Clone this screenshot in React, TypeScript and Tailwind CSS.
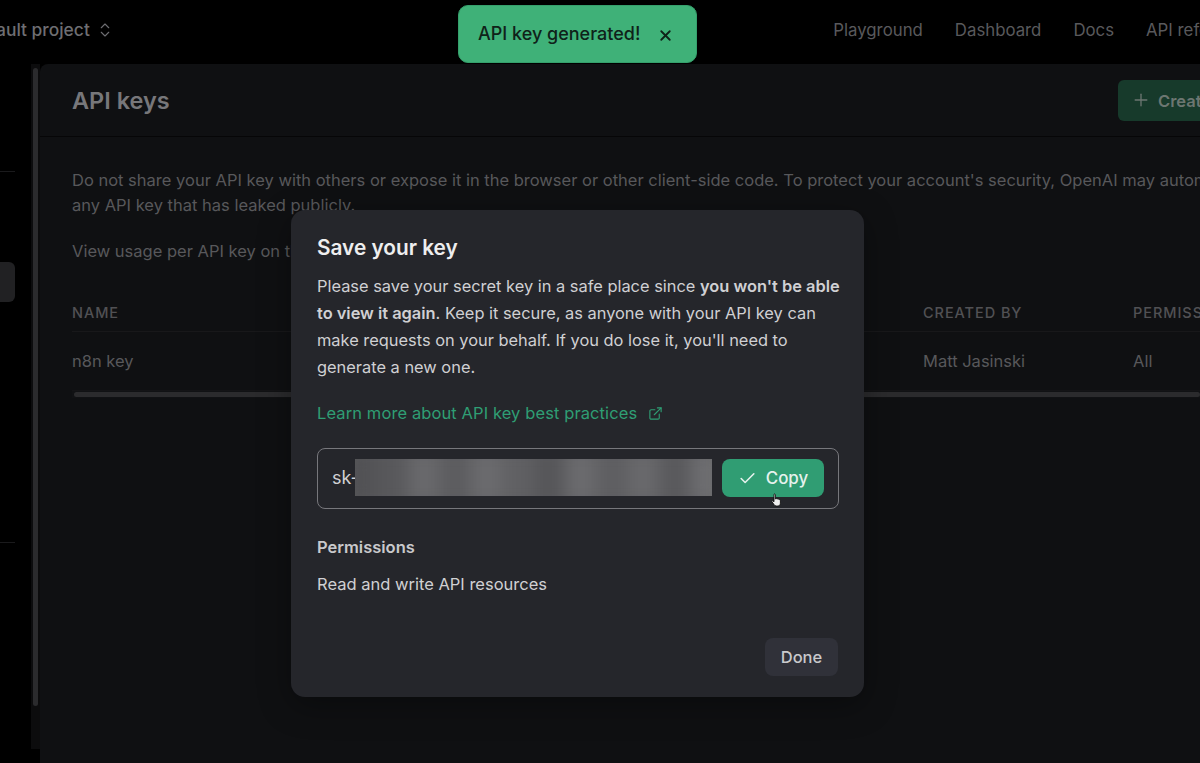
import React from "react";
import { ChevronsUpDown, Plus, X, Check, ExternalLink } from "lucide-react";

const blobs = ["#525255", "#58585b", "#69696c", "#5c5c5f", "#6b6b6e", "#606063", "#565659", "#6b6b6e", "#5e5e61", "#69696c", "#59595c", "#6e6e71"];

export default function App() {
  return (
    <div className="relative flex h-[763px] w-[1200px] flex-col overflow-hidden bg-black font-['Inter',sans-serif] text-[16.5px]">
      <header className="flex h-[64px] shrink-0 items-center justify-between">
        <div className="ml-[-33px] mt-[-4px] flex items-center gap-[6px] text-[17.4px] font-medium text-[#6e6e72]">
          <span>Default project</span>
          <ChevronsUpDown size={18} strokeWidth={1.5} />
        </div>
        <nav className="mr-[-54px] mt-[-3px] flex items-center gap-[32px] text-[16.8px] text-[#59595c]">
          <span>Playground</span>
          <span>Dashboard</span>
          <span>Docs</span>
          <span>API reference</span>
        </nav>
      </header>
      <div className="flex min-h-0 flex-1">
        <aside className="flex w-[40px] shrink-0">
          <div className="flex h-[685px] w-[31px] flex-col">
            <div className="mt-[107px] h-px w-[15px] bg-[#1a1a1c]" />
            <div className="mt-[90px] h-[40px] w-[15px] rounded-r-[6px] bg-[#212123]" />
            <div className="mt-[240px] h-px w-[15px] bg-[#1a1a1c]" />
          </div>
          <div className="flex h-[685px] w-[9px] justify-center bg-[#0c0c0d] pt-[4px]">
            <div className="h-[638px] w-[5px] rounded-full bg-[#2b2b2d]" />
          </div>
        </aside>
        <main className="min-w-[1160px] flex-1 rounded-tl-[8px] bg-[#0f1012]">
          <div className="flex h-[73px] items-center justify-between border-b border-[#060607] pl-[32px]">
            <h1 className="mt-[2px] text-[23.5px] font-semibold text-[#77777a]">API keys</h1>
            <div className="mr-[-60px] flex h-[41px] w-[142px] items-center gap-[7px] rounded-[6px] bg-[#173a2b] pl-[13px] font-semibold text-[#6c7671]">
              <Plus size={20} strokeWidth={1.6} />
              <span className="mt-[2px]">Create</span>
            </div>
          </div>
          <div className="pl-[32px] pt-[31px] text-[#58585b]">
            <p className="w-[1300px] leading-[25px]">
              Do not share your API key with others or expose it in the browser or other client-side code. To protect your account's security, OpenAI may automatically disable
              <br />
              any API key that has leaked publicly.
            </p>
            <p className="mt-[21px] leading-[25px]">View usage per API key on the Usage page.</p>
            <div className="mt-[34px] w-[1128px] overflow-hidden">
              <div className="grid h-[34px] w-[1300px] grid-cols-[851px_210px_200px] items-center border-b border-[#18181a] pb-[3px] text-[14.5px] font-medium tracking-[0.065em] text-[#515154]">
                <span>NAME</span>
                <span>CREATED BY</span>
                <span>PERMISSIONS</span>
              </div>
              <div className="grid h-[58px] w-[1300px] grid-cols-[851px_210px_200px] items-center text-[#58585b]">
                <span>n8n key</span>
                <span>Matt Jasinski</span>
                <span>All</span>
              </div>
              <div className="flex h-[8px] items-center border-t border-[#141416] bg-[#111214] pl-[2px]">
                <div className="h-[5px] w-full rounded-full bg-[#2b2b2d]" />
              </div>
            </div>
          </div>
        </main>
      </div>

      <div className="absolute left-[458px] top-[5px] flex h-[58px] w-[239px] items-center rounded-[10px] border border-[#35a06c] bg-[#3fb178] pl-[19px] text-[18px] font-medium text-[#0f2219]">
        <span className="mt-[-1px]">API key generated!</span>
        <X size={17} strokeWidth={2.6} className="ml-[17px] mt-[3px]" />
      </div>

      <div className="absolute left-[291px] top-[210px] flex h-[487px] w-[573px] flex-col rounded-[14px] bg-[#25262b] pl-[26px] pr-[20px] pt-[25px] text-[#d0d0d3] shadow-[0_8px_32px_rgba(0,0,0,0.35)]">
        <h2 className="text-[20.8px] font-semibold leading-[25px] text-[#eeeeef]">Save your key</h2>
        <p className="mt-[13px] text-[16.4px] leading-[27px]">
          Please save your secret key in a safe place since <b className="font-semibold">you won't be able to view it again</b>. Keep it secure, as anyone with your API key can make requests on your behalf. If you do lose it, you'll need to generate a new one.
        </p>
        <div className="mt-[19px] flex items-center gap-[11px] tracking-[0.1px] text-[#2f9e74]">
          <span className="leading-[27px]">Learn more about API key best practices</span>
          <ExternalLink size={15} strokeWidth={1.8} />
        </div>
        <div className="relative mt-[21px] flex h-[61px] w-[522px] items-center rounded-[8px] border-[1.5px] border-[#77777c] pb-[2px] pl-[14px]">
          <span className="w-[23px] shrink-0 overflow-hidden text-[18px] text-[#d0d0d3]">sk-</span>
          <div className="flex h-[37px] w-[357px] shrink-0 overflow-hidden bg-[#5c5c5f]">
            <div className="m-[-10px] flex h-[57px] w-[377px] shrink-0 blur-[9px]">
              {blobs.map((c, i) => (
                <div key={i} className="h-full flex-1" style={{ backgroundColor: c }} />
              ))}
            </div>
          </div>
          <div className="ml-[10px] flex h-[38px] w-[102px] items-center justify-center gap-[9px] rounded-[8px] bg-[#309d73] pt-[2px] text-[16.9px] font-medium text-[#e6f2ed]">
            <Check size={19} strokeWidth={2} />
            <span>Copy</span>
          </div>
          <svg className="absolute left-[453px] top-[44px]" width="11" height="15" viewBox="0 0 11 15">
            <path d="M3 1.2c.8-.6 1.4 0 1.4 .8v4l.8-.4.9.3 .9-.1 .9.5.7.2c.6.3.8.9.8 1.5v2.2c0 1.6-1 2.8-2.6 2.8H5.2c-.9 0-1.5-.4-2-1.2L1 8.8c-.4-.7.4-1.4 1-.9l1 .9V2c0-.4 0-.6 0-.8z" fill="#eee" stroke="#111" strokeWidth="0.9" />
          </svg>
        </div>
        <h3 className="mt-[26px] font-semibold leading-[24px] text-[#c9c9cc]">Permissions</h3>
        <p className="mt-[13px] leading-[24px]">Read and write API resources</p>
        <div className="mb-[21px] mr-[6px] mt-auto flex justify-end">
          <div className="flex h-[38px] w-[73px] items-center justify-center rounded-[8px] bg-[#303139] font-medium text-[#c9c9cc]">Done</div>
        </div>
      </div>
    </div>
  );
}
